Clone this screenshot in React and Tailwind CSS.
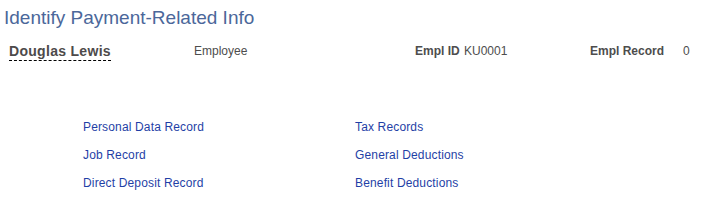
const leftLinks = ["Personal Data Record", "Job Record", "Direct Deposit Record"]
const rightLinks = ["Tax Records", "General Deductions", "Benefit Deductions"]

const App = () => {
  return (
    <div className="w-[702px] h-[224px] bg-white font-['Liberation_Sans',Arial,sans-serif]">
      <h1 className="pl-[4px] pt-[6px] text-[19px] leading-[24px] text-[#4b679a]">Identify Payment-Related Info</h1>

      <div className="flex items-start mt-[13px] text-[12px] leading-[14px] text-[#4d4d4d]">
        <div className="w-[194px] pl-[9px]">
          <span className="inline-block text-[14px] leading-[16px] font-bold tracking-[0.3px] text-[#4d4a4a] border-b border-dashed border-black pb-[1px]">
            Douglas Lewis
          </span>
        </div>
        <div className="w-[221px] pt-[1px]">Employee</div>
        <div className="w-[49px] pt-[1px] font-bold">Empl ID</div>
        <div className="w-[126px] pt-[1px]">KU0001</div>
        <div className="w-[93px] pt-[1px] font-bold">Empl Record</div>
        <div className="pt-[1px]">0</div>
      </div>

      <div className="flex mt-[59px] pl-[83px] text-[12px] leading-[14px] tracking-[0.15px] text-[#1f3fa6]">
        <div className="w-[272px] flex flex-col gap-[14px]">
          {leftLinks.map((l) => (
            <a key={l} className="cursor-pointer">{l}</a>
          ))}
        </div>
        <div className="flex flex-col gap-[14px]">
          {rightLinks.map((l) => (
            <a key={l} className="cursor-pointer">{l}</a>
          ))}
        </div>
      </div>
    </div>
  )
}

export default App
